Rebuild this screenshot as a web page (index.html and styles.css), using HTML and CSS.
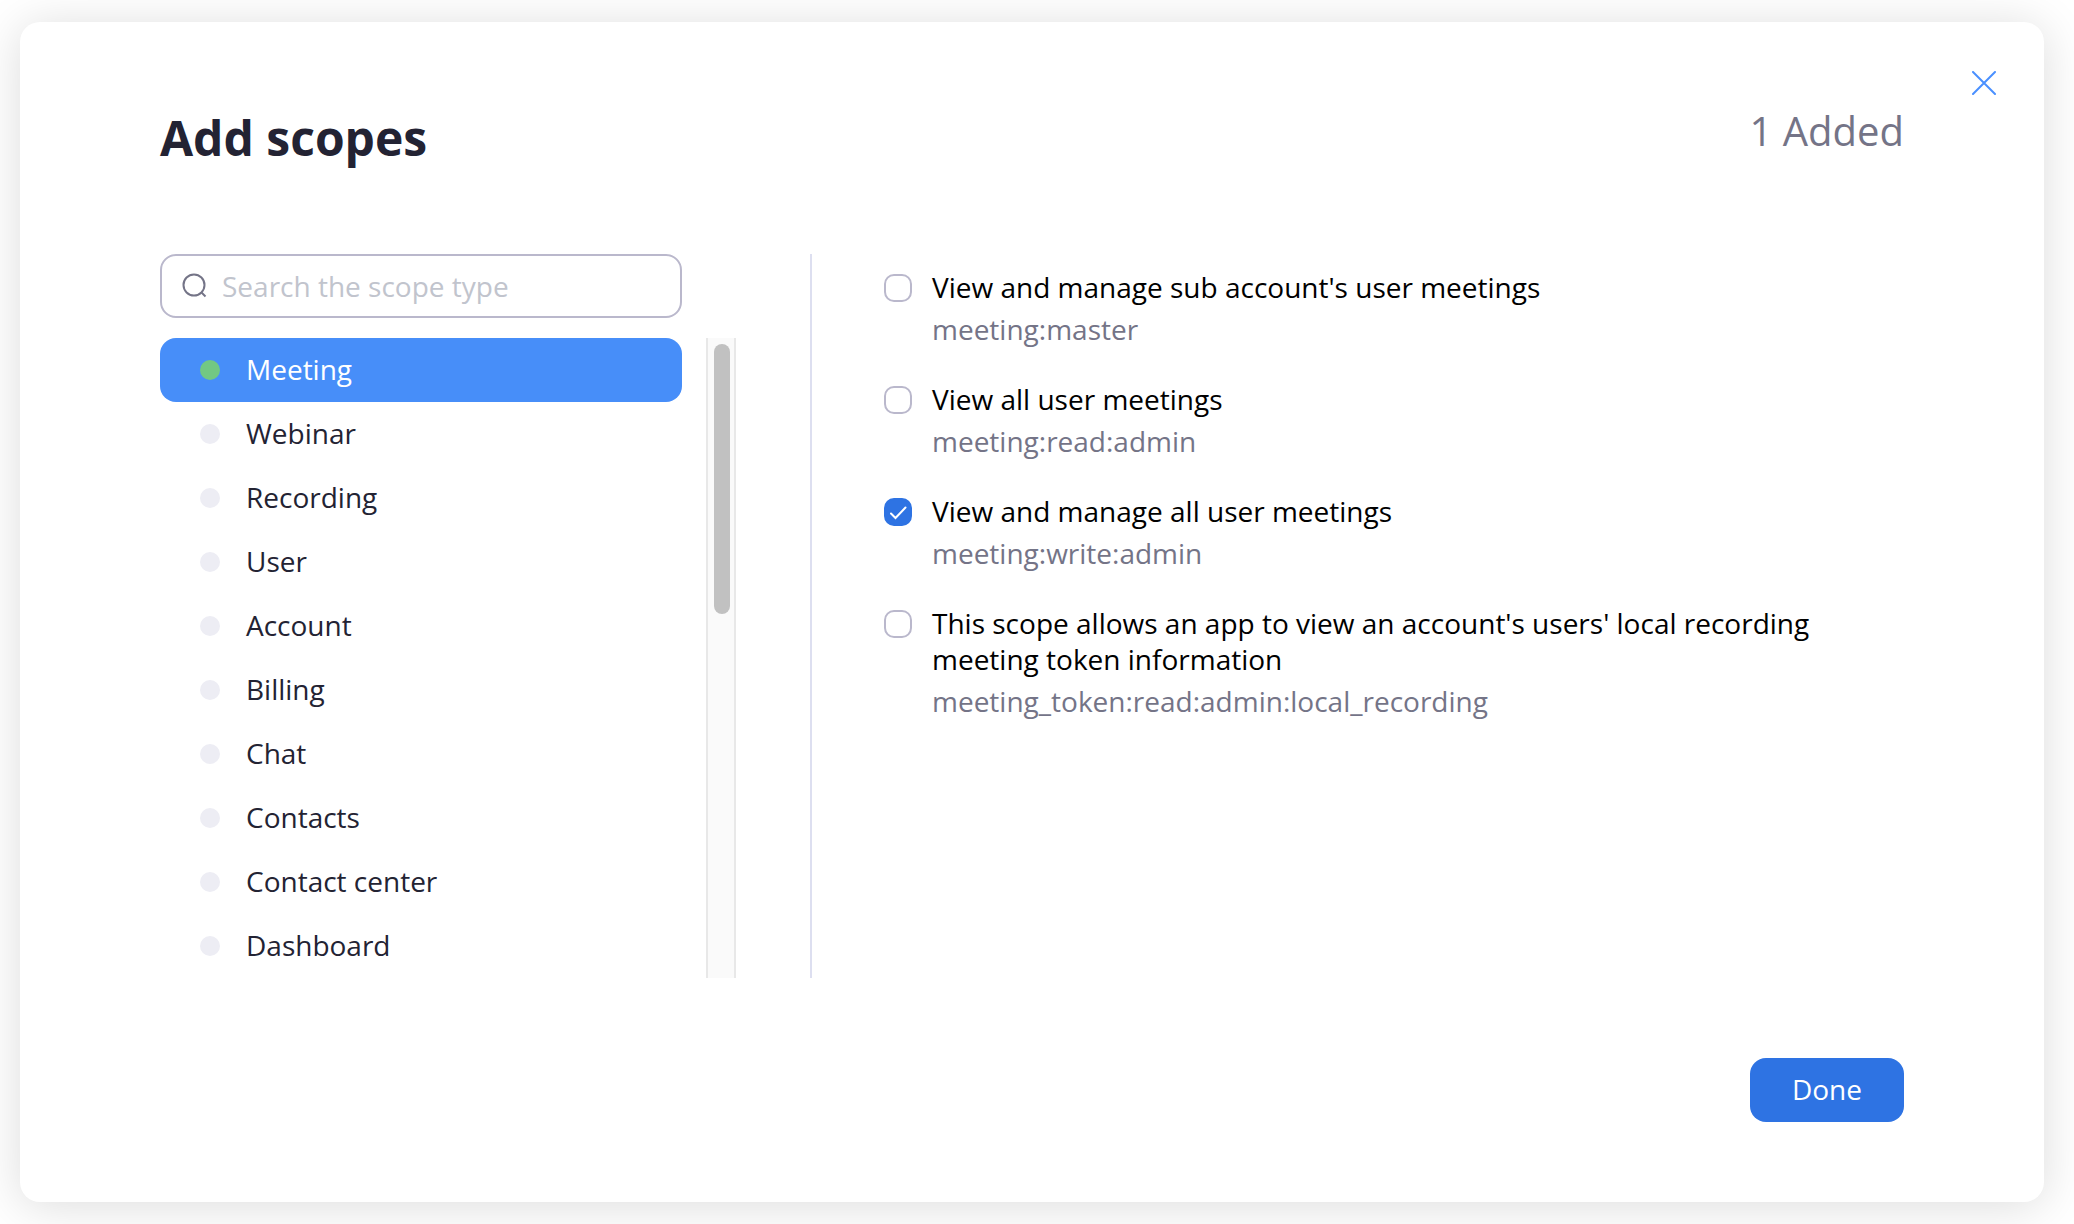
FILE: index.html
```html
<!DOCTYPE html>
<html lang="en">
<head>
<meta charset="utf-8">
<meta name="viewport" content="width=device-width, initial-scale=1">
<title>Add scopes</title>
<link rel="stylesheet" href="styles.css">
</head>
<body>
<main class="dialog" role="dialog" aria-labelledby="dialog-title">
  <button class="close" type="button" aria-label="Close">
    <svg viewBox="0 0 24 24" width="24" height="24" aria-hidden="true"><path d="M1 1l22 22M23 1L1 23"/></svg>
  </button>
  <header class="header">
    <h1 class="title" id="dialog-title">Add scopes</h1>
    <p class="count">1 Added</p>
  </header>
  <div class="content">
    <section class="types">
      <label class="search">
        <svg class="search-icon" viewBox="0 0 26 26" width="26" height="26" aria-hidden="true"><circle cx="12" cy="12" r="10.5"/><path d="M19 19l4.500 4.500"/></svg>
        <input class="search-input" type="search" placeholder="Search the scope type" aria-label="Search the scope type">
      </label>
      <div class="type-area">
        <nav class="type-list">
          <button class="type type-active" type="button"><span class="dot"></span><span class="type-name">Meeting</span></button>
          <button class="type" type="button"><span class="dot"></span><span class="type-name">Webinar</span></button>
          <button class="type" type="button"><span class="dot"></span><span class="type-name">Recording</span></button>
          <button class="type" type="button"><span class="dot"></span><span class="type-name">User</span></button>
          <button class="type" type="button"><span class="dot"></span><span class="type-name">Account</span></button>
          <button class="type" type="button"><span class="dot"></span><span class="type-name">Billing</span></button>
          <button class="type" type="button"><span class="dot"></span><span class="type-name">Chat</span></button>
          <button class="type" type="button"><span class="dot"></span><span class="type-name">Contacts</span></button>
          <button class="type" type="button"><span class="dot"></span><span class="type-name">Contact center</span></button>
          <button class="type" type="button"><span class="dot"></span><span class="type-name">Dashboard</span></button>
        </nav>
        <div class="scrollbar"><div class="thumb"></div></div>
      </div>
    </section>
    <section class="scopes">
      <label class="scope">
        <input class="check" type="checkbox">
        <span class="scope-text"><span class="scope-name">View and manage sub account's user meetings</span><span class="scope-code">meeting:master</span></span>
      </label>
      <label class="scope">
        <input class="check" type="checkbox">
        <span class="scope-text"><span class="scope-name">View all user meetings</span><span class="scope-code">meeting:read:admin</span></span>
      </label>
      <label class="scope">
        <input class="check" type="checkbox" checked>
        <span class="scope-text"><span class="scope-name">View and manage all user meetings</span><span class="scope-code">meeting:write:admin</span></span>
      </label>
      <label class="scope">
        <input class="check" type="checkbox">
        <span class="scope-text"><span class="scope-name">This scope allows an app to view an account's users' local recording meeting token information</span><span class="scope-code">meeting_token:read:admin:local_recording</span></span>
      </label>
    </section>
  </div>
  <footer class="footer">
    <button class="done" type="button">Done</button>
  </footer>
</main>
</body>
</html>
```
FILE: styles.css
```css
* {
  box-sizing: border-box;
}

body {
  margin: 0;
  padding: 22px 30px 22px 20px;
  background: #fff;
  color: #232333;
  font-family: "Open Sans", "Noto Sans", sans-serif;
  font-size: 28px;
  line-height: 36px;
}

button,
input {
  font: inherit;
  color: inherit;
}

.dialog {
  position: relative;
  padding: 80px 140px;
  border-radius: 20px;
  background: #fff;
  box-shadow: 0 4px 48px rgba(0, 0, 0, 0.14);
}

.close {
  position: absolute;
  top: 41px;
  right: 40px;
  display: flex;
  padding: 8px;
  border: 0;
  background: none;
}

.close svg {
  fill: none;
  stroke: #4a90ff;
  stroke-width: 2;
  stroke-linecap: round;
}

.header {
  display: flex;
  justify-content: space-between;
  align-items: flex-start;
  margin-bottom: 80px;
}

.title {
  margin: 0;
  font-size: 48px;
  font-weight: 700;
  line-height: 72px;
}

.count {
  margin: 0;
  color: #747487;
  font-size: 40px;
  line-height: 58px;
}

.content {
  display: flex;
}

.types {
  flex: 0 0 650px;
  padding-right: 74px;
}

.search {
  display: flex;
  align-items: center;
  gap: 14px;
  height: 64px;
  margin: 0 54px 20px 0;
  padding: 0 20px;
  border: 2px solid #bab8cc;
  border-radius: 16px;
}

.search-icon {
  flex: none;
  fill: none;
  stroke: #747487;
  stroke-width: 2;
}

.search-input {
  flex: 1;
  min-width: 0;
  padding: 0;
  border: 0;
  outline: 0;
  background: none;
  appearance: none;
}

.search-input::placeholder {
  color: #c1c4cd;
  opacity: 1;
}

.type-area {
  display: flex;
  gap: 24px;
}

.type-list {
  flex: 1;
}

.type {
  display: flex;
  align-items: center;
  gap: 26px;
  width: 100%;
  height: 64px;
  padding: 0 40px;
  border: 0;
  border-radius: 16px;
  background: none;
  text-align: left;
}

.type-active {
  background: #478ef9;
  color: #fff;
}

.type-name {
  padding-bottom: 2px;
}

.dot {
  width: 20px;
  height: 20px;
  border-radius: 50%;
  background: #ededf4;
}

.type-active .dot {
  background: #72c883;
}

.scrollbar {
  width: 30px;
  padding: 6px;
  border: 2px solid #e8e8e8;
  border-width: 0 2px;
  background: #fafafa;
}

.thumb {
  width: 16px;
  height: 270px;
  border-radius: 8px;
  background: #c1c1c1;
}

.scopes {
  flex: 1;
  display: flex;
  flex-direction: column;
  gap: 34px;
  padding: 15px 0 0 72px;
  border-left: 2px solid #dddff0;
}

.scope {
  display: flex;
  align-items: flex-start;
  gap: 20px;
}

.check {
  flex: none;
  width: 28px;
  height: 28px;
  margin: 5px 0 0;
  border: 2px solid #bab8cc;
  border-radius: 10px;
  background: #fff;
  appearance: none;
}

.check:checked {
  border-color: #2e73e3;
  background: #2e73e3 url("data:image/svg+xml,%3Csvg xmlns='http://www.w3.org/2000/svg' viewBox='0 0 24 24'%3E%3Cpath d='M5 13.5l4.500 4.500L19.500 7.500' fill='none' stroke='%23fff' stroke-width='2' stroke-linecap='round'/%3E%3C/svg%3E") center / 24px 24px no-repeat;
}

.scope-text,
.scope-name,
.scope-code {
  display: block;
}

.scope-name {
  color: #000;
}

.scope-code {
  margin-top: 6px;
  color: #747487;
}

.footer {
  display: flex;
  justify-content: flex-end;
  margin-top: 80px;
}

.done {
  height: 64px;
  padding: 0 42px 2px;
  border: 0;
  border-radius: 16px;
  background: #2e73e3;
  color: #fff;
}
```
